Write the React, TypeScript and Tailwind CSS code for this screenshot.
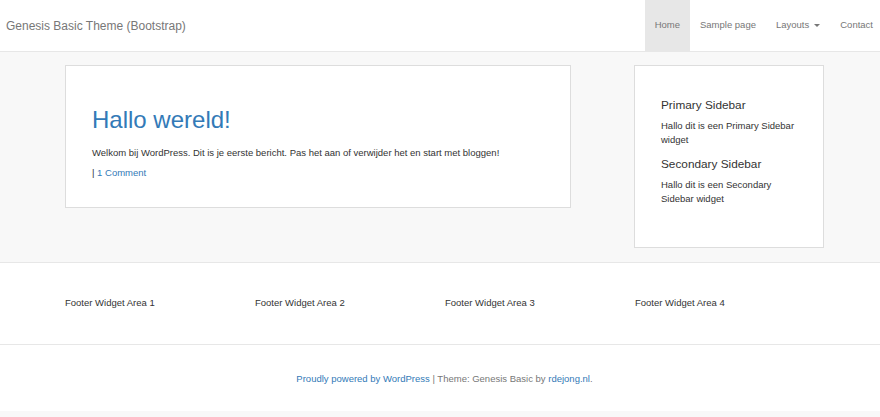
import React from "react";

const navItems = [
  { label: "Home", active: true },
  { label: "Sample page" },
  { label: "Layouts", caret: true },
  { label: "Contact" },
];

const footerWidgets = [
  "Footer Widget Area 1",
  "Footer Widget Area 2",
  "Footer Widget Area 3",
  "Footer Widget Area 4",
];

export default function App() {
  return (
    <div className="min-h-[417px] bg-white font-['Liberation_Sans',Arial,sans-serif] text-[#333]">
      {/* navbar */}
      <header className="flex h-[52px] items-stretch justify-between border-b border-[#e7e7e7] bg-white">
        <div className="flex items-center pl-[6px] text-[12px] text-[#777]">
          Genesis Basic Theme (Bootstrap)
        </div>
        <nav className="flex items-stretch">
          {navItems.map((item) => (
            <a
              key={item.label}
              href="#"
              className={`flex items-center px-[10px] text-[9.5px] text-[#777] ${
                item.active ? "bg-[#e7e7e7] text-[#555]" : ""
              } ${item.label === "Contact" ? "pr-[7px]" : ""}`}
            >
              {item.label}
              {item.caret && (
                <span className="ml-[5px] inline-block h-0 w-0 border-x-[3px] border-t-[3px] border-x-transparent border-t-[#777]" />
              )}
            </a>
          ))}
        </nav>
      </header>

      {/* content */}
      <main className="bg-[#f8f8f8] pb-[14px] pt-[13px]">
        <div className="ml-[65px] flex w-[759px] items-start gap-[63px]">
          <article className="w-[506px] border border-[#ddd] bg-white px-[26px] pb-[27px] pt-[41px]">
            <h1 className="text-[24px] leading-[1.1] text-[#337ab7]">Hallo wereld!</h1>
            <p className="mt-[13px] text-[9.5px] leading-[14px] text-[#333]">
              Welkom bij WordPress. Dit is je eerste bericht. Pas het aan of verwijder het en start met bloggen!
            </p>
            <p className="mt-[6px] text-[9.5px] leading-[14px] text-[#333]">
              | <a href="#" className="text-[#337ab7]">1 Comment</a>
            </p>
          </article>

          <aside className="w-[190px] border border-[#ddd] bg-white px-[26px] pb-[41px] pt-[32px]">
            <section>
              <h3 className="text-[11.8px] leading-[14px] text-[#333]">Primary Sidebar</h3>
              <p className="mt-[7px] text-[9.5px] leading-[14px]">Hallo dit is een Primary Sidebar widget</p>
            </section>
            <section className="mt-[10px]">
              <h3 className="text-[11.8px] leading-[14px] text-[#333]">Secondary Sidebar</h3>
              <p className="mt-[7px] text-[9.5px] leading-[14px]">Hallo dit is een Secondary Sidebar widget</p>
            </section>
          </aside>
        </div>
      </main>

      {/* footer widgets */}
      <section className="border-y border-[#e7e7e7] bg-white pb-[34px] pt-[33px]">
        <div className="ml-[65px] grid w-[760px] grid-cols-4">
          {footerWidgets.map((w) => (
            <div key={w} className="text-[9.5px] leading-[14px] text-[#333]">
              {w}
            </div>
          ))}
        </div>
      </section>

      {/* credits */}
      <footer className="bg-white pb-[25px] pt-[27px]">
        <p className="ml-[65px] w-[759px] text-center text-[9.5px] leading-[14px] text-[#777]">
          <a href="#" className="text-[#337ab7]">Proudly powered by WordPress</a> | Theme: Genesis Basic by{" "}
          <a href="#" className="text-[#337ab7]">rdejong.nl</a>.
        </p>
      </footer>
      <div className="h-[6px] bg-[#f8f8f8]" />
    </div>
  );
}
